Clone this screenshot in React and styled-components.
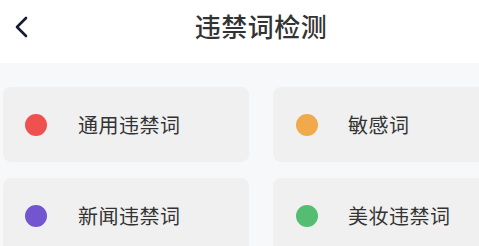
import React from "react";
import styled, { createGlobalStyle } from "styled-components";

const Global = createGlobalStyle`
  html, body { margin: 0; padding: 0; background: #f7f8fa; }
  body { font-family: "Noto Sans CJK SC", "Noto Sans", sans-serif; overflow: hidden; }
`;

const Viewport = styled.div`
  width: 479px;
  height: 246px;
  overflow: hidden;
  background: #f7f8fa;
`;

const Page = styled.div`
  width: 522px;
`;

const Header = styled.div`
  position: relative;
  height: 63px;
  background: #ffffff;
  display: flex;
  align-items: center;
  justify-content: center;
`;

const Back = styled.button`
  position: absolute;
  left: 8px;
  top: 12px;
  width: 26px;
  height: 30px;
  border: 0;
  padding: 0;
  background: transparent;
  display: flex;
  align-items: center;
  justify-content: center;
`;

const Title = styled.h1`
  margin: 0 0 13px 0;
  font-size: 26px;
  font-weight: 500;
  color: #333333;
  letter-spacing: 0.5px;
`;

const Grid = styled.div`
  display: grid;
  grid-template-columns: 246px 246px;
  column-gap: 24px;
  row-gap: 16px;
  padding: 24px 0 0 3px;
`;

const Card = styled.div`
  height: 75px;
  border-radius: 8px;
  background: #f0f0f0;
  display: flex;
  align-items: center;
  padding-left: ${(p) => p.$pad}px;
  box-sizing: border-box;
`;

const Dot = styled.span`
  width: 22px;
  height: 22px;
  border-radius: 50%;
  background: ${(p) => p.$color};
  flex: none;
`;

const Label = styled.span`
  margin-left: ${(p) => p.$gap}px;
  font-size: 20px;
  color: #333333;
  letter-spacing: 0.5px;
`;

const items = [
  { label: "通用违禁词", color: "#ef5151", pad: 22, gap: 31 },
  { label: "敏感词", color: "#f0aa4c", pad: 23, gap: 30 },
  { label: "新闻违禁词", color: "#7355d0", pad: 22, gap: 31 },
  { label: "美妆违禁词", color: "#55bd72", pad: 23, gap: 30 },
];

export default function App() {
  return (
    <Viewport>
      <Global />
      <Page>
        <Header>
          <Back aria-label="返回">
            <svg width="16" height="22" viewBox="0 0 16 22">
              <path d="M13 2 L4 11 L13 20" fill="none" stroke="#141b33" strokeWidth="2.6" strokeLinecap="round" strokeLinejoin="round" />
            </svg>
          </Back>
          <Title>违禁词检测</Title>
        </Header>
        <Grid>
          {items.map((it) => (
            <Card key={it.label} $pad={it.pad}>
              <Dot $color={it.color} />
              <Label $gap={it.gap}>{it.label}</Label>
            </Card>
          ))}
        </Grid>
      </Page>
    </Viewport>
  );
}
